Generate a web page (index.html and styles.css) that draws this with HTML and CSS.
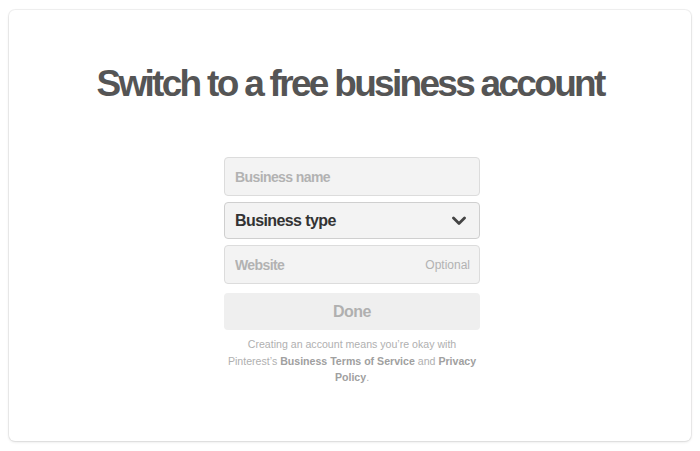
FILE: index.html
```html
<!DOCTYPE html>
<html>
<head>
  <meta charset="UTF-8" />
  <link rel="stylesheet" href="styles.css">
</head>
<body>
  <div class="card">
    <h1 class="title">Switch to a free business account</h1>

    <form class="form">
      <div class="field">
        <input type="text" class="field-input" placeholder="Business name" />
      </div>

      <div class="field field-select">
        <span class="select-label">Business type</span>
        <svg class="chevron" width="14" height="10" viewBox="0 0 14 10">
          <path d="M1.5 2 L7 7.5 L12.5 2" fill="none" stroke="#444" stroke-width="2.8" stroke-linecap="round" stroke-linejoin="round" />
        </svg>
      </div>

      <div class="field">
        <input type="text" class="field-input" placeholder="Website" />
        <span class="field-hint">Optional</span>
      </div>

      <button type="button" class="btn-done">Done</button>

      <p class="terms">
        <span>Creating an account means you’re okay with</span><br>
        <span>Pinterest’s</span> <b>Business Terms of Service</b> <span>and</span> <b>Privacy</b><br>
        <b>Policy</b><span>.</span>
      </p>
    </form>
  </div>
</body>
</html>
```

FILE: styles.css
```css
body {
  margin: 0;
  padding: 10px 9px;
  background: #fff;
  font-family: "Liberation Sans", Arial, sans-serif;
}

.card {
  height: 431px;
  box-sizing: border-box;
  border-radius: 6px;
  background: #fff;
  box-shadow: 0 0 0 1px rgba(0, 0, 0, 0.05), 0 1px 3px rgba(0, 0, 0, 0.12);
  padding-top: 52px;
  text-align: center;
}

.title {
  margin: 0;
  font-size: 37px;
  font-weight: bold;
  letter-spacing: -2.7px;
  color: #555;
  line-height: 44px;
}

.form {
  width: 256px;
  margin: 51px auto 0;
  position: relative;
  left: 2px;
}

.field {
  display: flex;
  align-items: center;
  height: 39px;
  margin-bottom: 6px;
  box-sizing: border-box;
  border: 1px solid #dcdcdc;
  border-radius: 4px;
  background: #f3f3f3;
}

.field-input {
  flex: 1;
  width: 0;
  min-width: 0;
  height: 100%;
  padding: 0 10px;
  border: none;
  background: transparent;
  font-family: inherit;
  font-size: 14px;
  font-weight: bold;
  letter-spacing: -0.6px;
  color: #333;
  outline: none;
}

.field-input::placeholder {
  color: #b2b2b2;
}

.field-hint {
  padding-right: 9px;
  font-size: 12px;
  color: #b2b2b2;
}

.field-select {
  height: 37px;
  justify-content: space-between;
  padding: 0 13px 0 10px;
  border-color: #cfcfcf;
}

.select-label {
  font-size: 16px;
  font-weight: bold;
  color: #333;
  letter-spacing: -0.6px;
}

.chevron {
  display: block;
}

.btn-done {
  display: block;
  width: 100%;
  height: 37px;
  margin-top: 9px;
  border: none;
  border-radius: 4px;
  background: #efefef;
  font-family: inherit;
  font-size: 16px;
  font-weight: bold;
  letter-spacing: -0.5px;
  color: #b0b0b0;
}

.terms {
  margin: 6px 0 0;
  font-size: 10.6px;
  line-height: 16.5px;
  color: #b0b0b0;
}

.terms b {
  color: #a0a0a0;
}
```
